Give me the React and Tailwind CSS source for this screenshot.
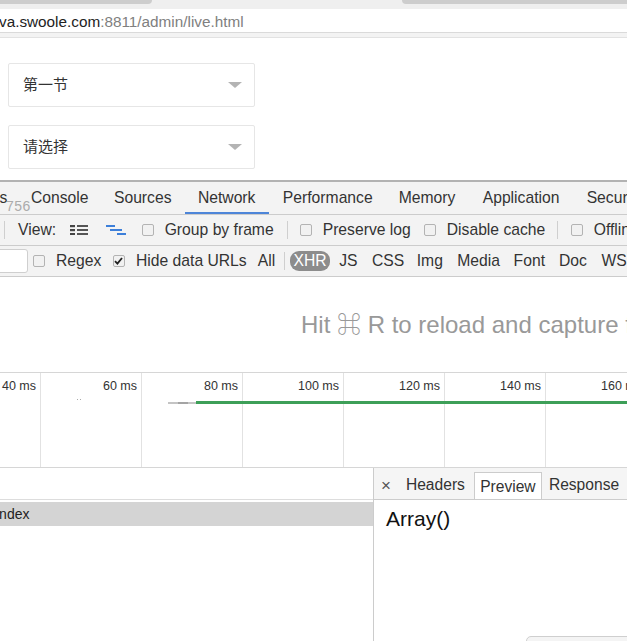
import React from 'react'

const sans = "font-['Liberation_Sans','Noto_Sans_CJK_SC',sans-serif]"

function Check({ checked }) {
  return (
    <span className="w-[12px] h-[12px] rounded-[2px] border border-[#b3b3b3] bg-[#f1f1f1] flex items-center justify-center shrink-0">
      {checked && (
        <svg width="9" height="8" viewBox="0 0 9 8">
          <path d="M1 4.2 L3.4 6.6 L8 1" fill="none" stroke="#222" strokeWidth="1.8" />
        </svg>
      )}
    </span>
  )
}

function Sep({ ml }) {
  return <span className={'w-px h-[18px] bg-[#cfcfcf] shrink-0 ' + ml} />
}

function Select({ label }) {
  return (
    <div className="w-[247px] h-[44px] border border-[#e6e6e6] rounded-[2px] bg-white flex items-center justify-between pl-[14px] pr-[12px]">
      <span className="text-[15px] text-[#333]">{label}</span>
      <span className="w-0 h-0 border-l-[7px] border-r-[7px] border-t-[6px] border-l-transparent border-r-transparent border-t-[#b4b4b4]" />
    </div>
  )
}

const cols = ['40 ms', '60 ms', '80 ms', '100 ms', '120 ms', '140 ms', '160 ms']

export default function App() {
  return (
    <div className={'w-[627px] h-[641px] overflow-hidden bg-white relative text-[#333] ' + sans}>
      {/* browser tab strip */}
      <div className="h-[9px] bg-[#efefef] flex items-start">
        <div className="w-[152px] h-[4px] bg-[#cdcdcd] rounded-br-[4px]" />
        <div className="flex-1" />
        <div className="w-[225px] h-[4px] bg-[#cdcdcd] rounded-bl-[4px]" />
      </div>
      {/* address bar */}
      <div className="h-[24px] bg-white border-b border-[#dadada] flex items-center overflow-hidden">
        <span className="text-[15.3px] whitespace-nowrap ml-[-1px] leading-none pt-[2px]">
          <span className="text-[#222]">va.swoole.com</span>
          <span className="text-[#808080]">:8811/admin/live.html</span>
        </span>
      </div>
      <div className="h-[5px] bg-[#f3f3f3] border-b border-[#e2e2e2]" />

      {/* page */}
      <div className="h-[142px] pt-[25px] pl-[8px] flex flex-col gap-[18px]">
        <Select label="第一节" />
        <Select label="请选择" />
      </div>

      {/* devtools */}
      <div className="h-[2px] bg-[#b2b2b2]" />
      <div className="h-[33px] bg-[#f3f3f3] border-b border-[#cccccc] flex items-center text-[15.7px] whitespace-nowrap relative overflow-hidden *:shrink-0">
        <span className="ml-[-58px]">Elements</span>
        <span className="ml-[23.6px]">Console</span>
        <span className="ml-[25.4px]">Sources</span>
        <span className="ml-[26.4px] relative h-full flex items-center">
          Network
          <span className="absolute left-[-13px] right-[-14px] bottom-0 h-[2px] bg-[#4d85d8]" />
        </span>
        <span className="ml-[27.4px]">Performance</span>
        <span className="ml-[26.1px]">Memory</span>
        <span className="ml-[27.3px]">Application</span>
        <span className="ml-[27.2px]">Security</span>
        <span className="absolute left-[6px] top-[14px] text-[14px] text-[#ababab] tracking-[0.5px]">756</span>
      </div>

      {/* toolbar */}
      <div className="h-[31px] bg-[#f3f3f3] border-b border-[#cccccc] flex items-center text-[15.7px] whitespace-nowrap overflow-hidden *:shrink-0">
        <Sep ml="ml-[4px]" />
        <span className="ml-[13px]">View:</span>
        <svg className="ml-[13.6px]" width="18" height="10" viewBox="0 0 18 10">
          <rect x="0" y="0" width="5" height="2.2" fill="#444" />
          <rect x="7" y="0" width="11" height="2" fill="#555" />
          <rect x="0" y="4" width="5" height="2.2" fill="#444" />
          <rect x="7" y="4" width="11" height="2" fill="#555" />
          <rect x="0" y="8" width="5" height="2.2" fill="#444" />
          <rect x="7" y="8" width="11" height="2" fill="#555" />
        </svg>
        <svg className="ml-[18px]" width="20" height="10" viewBox="0 0 20 10">
          <rect x="0" y="0" width="9" height="2" fill="#3d7fd9" />
          <rect x="4" y="4" width="12" height="2" fill="#3d7fd9" />
          <rect x="11" y="8" width="9" height="2" fill="#3d7fd9" />
        </svg>
        <span className="ml-[16px]"><Check /></span>
        <span className="ml-[11px]">Group by frame</span>
        <Sep ml="ml-[13px]" />
        <span className="ml-[12px]"><Check /></span>
        <span className="ml-[11px]">Preserve log</span>
        <span className="ml-[13px]"><Check /></span>
        <span className="ml-[11px]">Disable cache</span>
        <Sep ml="ml-[11.4px]" />
        <span className="ml-[13px]"><Check /></span>
        <span className="ml-[11px]">Offline</span>
      </div>

      {/* filter row */}
      <div className="h-[31px] bg-[#f3f3f3] border-b border-[#cccccc] flex items-center text-[15.7px] whitespace-nowrap overflow-hidden *:shrink-0">
        <span className="ml-[-1px] w-[29px] h-[24px] bg-white border border-[#cfcfcf] rounded-r-[3px]" />
        <span className="ml-[5px]"><Check /></span>
        <span className="ml-[11px]">Regex</span>
        <span className="ml-[11.6px]"><Check checked /></span>
        <span className="ml-[11px]">Hide data URLs</span>
        <span className="ml-[11px]">All</span>
        <Sep ml="ml-[9px]" />
        <span className="ml-[5px] w-[40px] h-[20px] rounded-[9px] bg-[#8c8c8c] text-white flex items-center justify-center">XHR</span>
        <span className="ml-[9px]">JS</span>
        <span className="ml-[14.5px]">CSS</span>
        <span className="ml-[12.5px]">Img</span>
        <span className="ml-[14.3px]">Media</span>
        <span className="ml-[13.7px]">Font</span>
        <span className="ml-[14px]">Doc</span>
        <span className="ml-[14.5px]">WS</span>
        <span className="ml-[13px]">Other</span>
      </div>

      {/* empty message */}
      <div className="h-[95px] flex items-center pl-[301px] whitespace-nowrap overflow-hidden">
        <span className="text-[24px] text-[#999] shrink-0">Hit ⌘ R to reload and capture filmstrip.</span>
      </div>

      {/* timeline */}
      <div className="h-[96px] border-t border-b border-[#d6d6d6] relative flex overflow-hidden">
        <div className="flex ml-[-60px] shrink-0">
          {cols.map(function (c) {
            return (
              <div key={c} className="w-[101px] shrink-0 h-full border-r border-[#e2e2e2] text-right pr-[4px] pt-[4px] text-[12.5px] text-[#333] whitespace-nowrap">
                {c}
              </div>
            )
          })}
        </div>
        <span className="absolute left-[77px] top-[26px] w-[1px] h-[1px] bg-[#aaa]" />
        <span className="absolute left-[80px] top-[26px] w-[1px] h-[1px] bg-[#aaa]" />
        <span className="absolute left-[168px] top-[29px] w-[28px] h-[2px] bg-[#c4c4c4]" />
        <span className="absolute left-[178px] top-[29px] w-[10px] h-[2px] bg-[#a4a4a4]" />
        <span className="absolute left-[196px] right-0 top-[28px] h-[3px] bg-[#3d9f58]" />
      </div>

      {/* bottom panels */}
      <div className="flex h-[173px]">
        <div className="w-[374px] shrink-0 border-r border-[#cccccc]">
          <div className="h-[32px] bg-white border-b border-[#dddddd]" />
          <div className="mt-[2px] h-[24px] bg-[#d4d4d4] flex items-center overflow-hidden">
            <span className="ml-[-4px] text-[14px] text-[#222]">index</span>
          </div>
        </div>
        <div className="flex-1 relative">
          <div className="h-[32px] bg-[#f5f5f5] border-b border-[#cccccc] flex items-end text-[15.6px] whitespace-nowrap overflow-hidden *:shrink-0">
            <span className="ml-[7px] mb-[5px] text-[#555] text-[17px] leading-none">×</span>
            <span className="ml-[15px] mb-[3px]">Headers</span>
            <span className="ml-[9px] h-[28px] w-[68px] bg-white border border-b-0 border-[#cccccc] flex items-center justify-center mb-[-1px]">Preview</span>
            <span className="ml-[7px] mb-[3px]">Response</span>
          </div>
          <div className="pt-[7px] pl-[12px] text-[21px] leading-[24px] text-[#111]">Array()</div>
          <div className="absolute left-[152px] top-[168px] w-[120px] h-[14px] rounded-[5px] border border-[#cfcfcf] bg-[#f4f4f4]" />
        </div>
      </div>
    </div>
  )
}
